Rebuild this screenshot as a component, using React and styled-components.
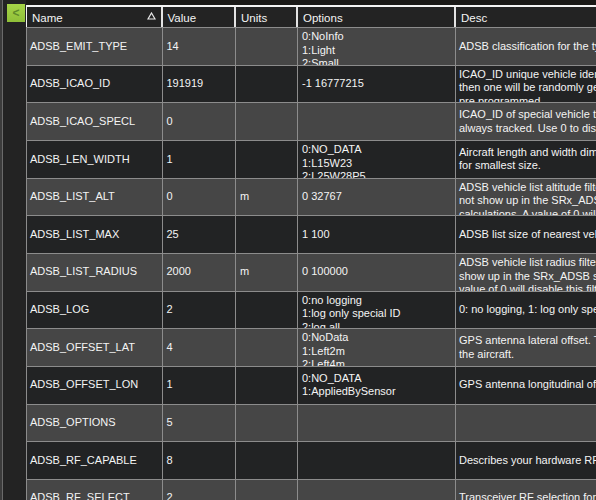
import React from 'react';
import styled, { createGlobalStyle } from 'styled-components';

const GlobalStyle = createGlobalStyle`
    html, body {
        margin: 0;
        padding: 0;
        width: 596px;
        height: 500px;
        overflow: hidden;
        background: #232323;
    }
`;

const Page = styled.div`
    display: flex;
    flex-direction: row;
    width: 596px;
    height: 500px;
    overflow: hidden;
    font-family: "Liberation Sans", Arial, sans-serif;
    font-size: 11px;
    color: #f4f4f4;
`;

const EdgeStrip = styled.div`
    width: 2px;
    flex: none;
    background: #3c3c3c;
    border-right: 1px solid #6a6a6a;
`;

const SidePanel = styled.div`
    width: 19px;
    flex: none;
    padding: 4px 0 0 4px;
    background: #232323;
`;

const CollapseBtn = styled.div`
    display: flex;
    align-items: center;
    justify-content: center;
    width: 18px;
    height: 18px;
    background: linear-gradient(#a6d448, #8fbf38);
    color: #5f8a2a;
    font-size: 12px;
    font-weight: bold;
`;

const Grid = styled.div`
    flex: none;
    width: 600px;
    padding-top: 5px;
    background: #1a1917;
`;

const Header = styled.div`
    display: flex;
    height: 22px;
    background: #232323;
    border-top: 2px solid #f4f4f4;
    border-left: 1px solid #f4f4f4;
    box-sizing: border-box;
`;

const HeadCell = styled.div`
    position: relative;
    display: flex;
    align-items: center;
    flex: none;
    box-sizing: border-box;
    width: ${(p) => p.$w}px;
    padding-left: 5px;
    padding-top: 1px;
    font-size: 11.5px;
    border-right: 2px solid ${(p) => (p.$last ? 'transparent' : '#e4e4e4')};
`;

const SortArrow = styled.svg`
    position: absolute;
    right: 5px;
    top: 5px;
`;

const Row = styled.div`
    display: flex;
    height: 37.67px;
    box-sizing: border-box;
    background: ${(p) => (p.$alt ? '#222324' : '#464646')};
    border-top: 1px solid #8c8c8c;
    border-left: 1px solid #8c8c8c;
`;

const Cell = styled.div`
    flex: none;
    box-sizing: border-box;
    width: ${(p) => p.$w}px;
    display: flex;
    flex-direction: column;
    justify-content: ${(p) => (p.$top ? 'flex-start' : 'center')};
    padding: ${(p) => (p.$top ? '2px' : '0')} 0 0 ${(p) => (p.$inset ? '4px' : '3px')};
    overflow: hidden;
    line-height: 13.6px;
    white-space: nowrap;
    border-right: 1px solid #8c8c8c;
`;

const columns = [135.5, 73.5, 62, 158, 200];

const rows = [
    { name: 'ADSB_EMIT_TYPE', value: '14', options: ['0:NoInfo', '1:Light', '2:Small'], desc: ['ADSB classification for the type of ADSB'] },
    { name: 'ADSB_ICAO_ID', value: '191919', options: ['-1 16777215'], desc: ['ICAO_ID unique vehicle identification', 'then one will be randomly generated', 'pre programmed.'] },
    { name: 'ADSB_ICAO_SPECL', value: '0', options: [], desc: ['ICAO_ID of special vehicle that', 'always tracked. Use 0 to disable.'] },
    { name: 'ADSB_LEN_WIDTH', value: '1', options: ['0:NO_DATA', '1:L15W23', '2:L25W28P5'], desc: ['Aircraft length and width dimensions', 'for smallest size.'] },
    { name: 'ADSB_LIST_ALT', value: '0', units: 'm', options: ['0 32767'], desc: ['ADSB vehicle list altitude filter.', 'not show up in the SRx_ADSB stream', 'calculations. A value of 0 will disable'] },
    { name: 'ADSB_LIST_MAX', value: '25', options: ['1 100'], desc: ['ADSB list size of nearest vehicles'] },
    { name: 'ADSB_LIST_RADIUS', value: '2000', units: 'm', options: ['0 100000'], desc: ['ADSB vehicle list radius filter.', 'show up in the SRx_ADSB stream', 'value of 0 will disable this filter'] },
    { name: 'ADSB_LOG', value: '2', options: ['0:no logging', '1:log only special ID', '2:log all'], desc: ['0: no logging, 1: log only special'] },
    { name: 'ADSB_OFFSET_LAT', value: '4', options: ['0:NoData', '1:Left2m', '2:Left4m'], desc: ['GPS antenna lateral offset. This', 'the aircraft.'] },
    { name: 'ADSB_OFFSET_LON', value: '1', options: ['0:NO_DATA', '1:AppliedBySensor'], desc: ['GPS antenna longitudinal offset'] },
    { name: 'ADSB_OPTIONS', value: '5', options: [], desc: [] },
    { name: 'ADSB_RF_CAPABLE', value: '8', options: [], desc: ['Describes your hardware RF'] },
    { name: 'ADSB_RF_SELECT', value: '2', options: [], desc: ['Transceiver RF selection for'] },
];

const Lines = ({ w, lines, inset }) => (
    <Cell $w={w} $top={lines.length > 2} $inset={inset}>
        {lines.map((line) => <span key={line}>{line}</span>)}
    </Cell>
);

export default function App() {
    return (
        <Page>
            <GlobalStyle />
            <EdgeStrip />
            <SidePanel>
                <CollapseBtn>&lt;</CollapseBtn>
            </SidePanel>
            <Grid>
                <Header>
                    <HeadCell $w={columns[0]}>
                        Name
                        <SortArrow width="9" height="8" viewBox="0 0 9 8">
                            <path d="M4.5 1 L8 7 L1 7 Z" fill="none" stroke="#e8e8e8" strokeWidth="1.2" />
                        </SortArrow>
                    </HeadCell>
                    <HeadCell $w={columns[1]}>Value</HeadCell>
                    <HeadCell $w={columns[2]}>Units</HeadCell>
                    <HeadCell $w={columns[3]}>Options</HeadCell>
                    <HeadCell $w={columns[4]} $last>Desc</HeadCell>
                </Header>
                {rows.map((row, i) => (
                    <Row key={row.name} $alt={i % 2 === 1}>
                        <Cell $w={columns[0]}>{row.name}</Cell>
                        <Cell $w={columns[1]} $inset>{row.value}</Cell>
                        <Cell $w={columns[2]} $inset>{row.units}</Cell>
                        <Lines w={columns[3]} lines={row.options} inset />
                        <Lines w={columns[4]} lines={row.desc} />
                    </Row>
                ))}
            </Grid>
        </Page>
    );
}
